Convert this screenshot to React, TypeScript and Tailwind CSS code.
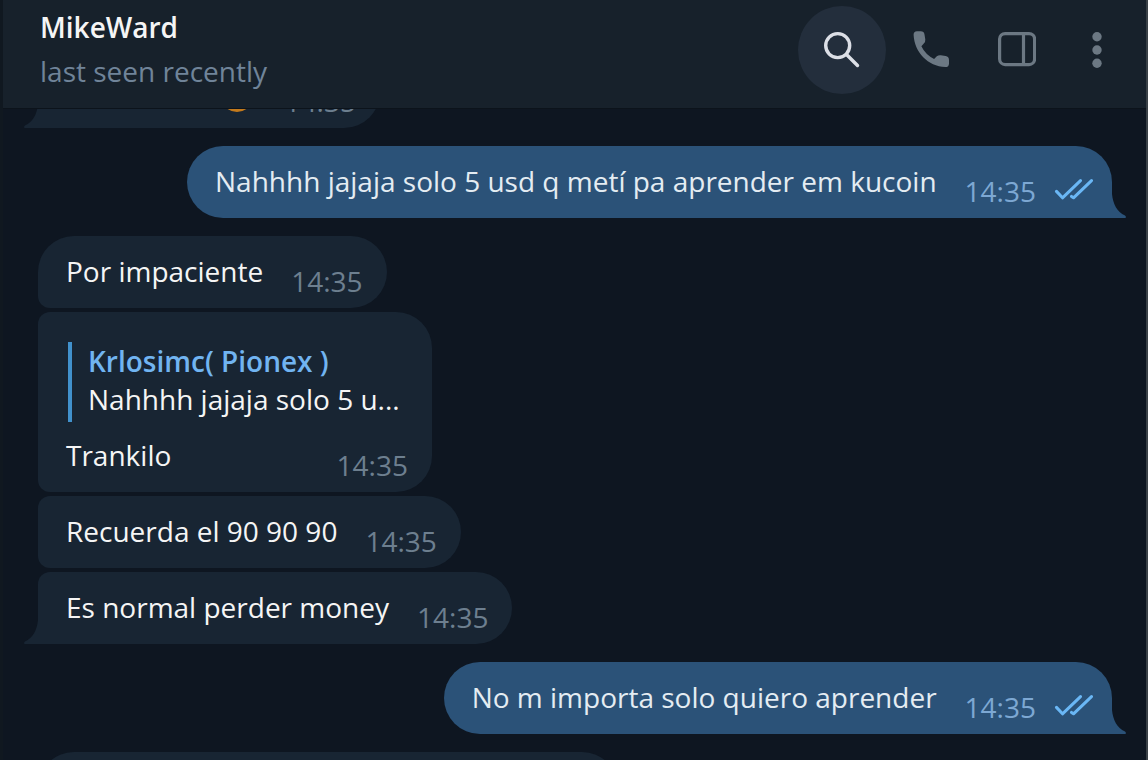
import React from "react";
import clsx from "clsx";

type Message = {
  id: number;
  text: string;
  time: string;
  own?: boolean;
  first?: boolean;
  last?: boolean;
  reply?: { author: string; text: string };
};

const messages: Message[] = [
  { id: 1, text: "Nahhhh jajaja solo 5 usd q metí pa aprender em kucoin", time: "14:35", own: true, first: true, last: true },
  { id: 2, text: "Por impaciente", time: "14:35", first: true },
  { id: 3, text: "Trankilo", time: "14:35", reply: { author: "Krlosimc( Pionex )", text: "Nahhhh jajaja solo 5 u..." } },
  { id: 4, text: "Recuerda el 90 90 90", time: "14:35" },
  { id: 5, text: "Es normal perder money", time: "14:35", last: true },
  { id: 6, text: "No m importa solo quiero aprender", time: "14:35", own: true, first: true, last: true },
];

function Tail({ own }: { own?: boolean }) {
  return (
    <svg
      aria-hidden="true"
      viewBox="0 0 14 24"
      className={clsx(
        "absolute bottom-0 h-6 w-3.5",
        own ? "left-full text-[#2b5278]" : "right-full -scale-x-100 text-[#182533]",
      )}
    >
      <path d="M0 0C1 10 5 18 13 21.6Q14.6 23 13.4 24H0Z" fill="currentColor" />
    </svg>
  );
}

function Ticks() {
  return (
    <svg role="img" aria-label="Read" viewBox="0 0 40 24" className="h-6 w-10 text-[#6ab7f5]">
      <path
        d="M2.5 12.4 8.5 18.8 26.5 1.6M17.5 17.4 19.5 18.8 37.5 1.6"
        fill="none"
        stroke="currentColor"
        strokeWidth="3"
        strokeLinecap="round"
        strokeLinejoin="round"
      />
    </svg>
  );
}

function Bubble({ message }: { message: Message }) {
  const { own, first, last, reply } = message;
  return (
    <li
      className={clsx(
        "relative w-fit max-w-full pb-4.5 pl-7",
        own ? "self-end bg-[#2b5278] pr-4.5 text-[#e4ecf2]" : "bg-[#182533] pr-6 text-[#f5f5f5]",
        own ? "rounded-[36px] rounded-br-none" : "rounded-r-[36px]",
        !own && (first ? "rounded-tl-[36px]" : "rounded-tl-xl"),
        !own && (last ? "rounded-bl-none" : "rounded-bl-xl"),
        reply ? "pt-7.5" : "pt-4",
        first ? "mt-4.5" : "mt-1",
      )}
    >
      {reply && (
        <blockquote className="mb-3.5 ml-0.5 w-[340px] border-l-4 border-[#4191cc] pb-1 pl-4">
          <p className="font-semibold text-[#71b4f1]">{reply.author}</p>
          <p className="whitespace-nowrap">{reply.text}</p>
        </blockquote>
      )}
      <div className="flex justify-between gap-7">
        <p>{message.text}</p>
        <div className={clsx("flex h-[38px] translate-y-2.5 items-center gap-[18px]", own ? "text-[#7da8d3]" : "text-[#6d7f8f]")}>
          <time>{message.time}</time>
          {own && <Ticks />}
        </div>
      </div>
      {last && <Tail own={own} />}
    </li>
  );
}

function IconButton({ label, className, children }: { label: string; className: string; children: React.ReactNode }) {
  return (
    <button type="button" aria-label={label} className={clsx("flex h-22 items-center justify-center", className)}>
      {children}
    </button>
  );
}

function Header() {
  return (
    <header className="flex h-[109px] shrink-0 items-start justify-between border-b border-[#0c131b] bg-[#17212b] pl-[37px] pr-2.5">
      <div className="flex flex-col gap-1.5 pt-2">
        <h1 className="font-semibold text-[#f5f5f5]">MikeWard</h1>
        <p className="text-[#708499]">last seen recently</p>
      </div>
      <div className="flex pt-1.5 text-[#6c7883]">
        <IconButton label="Search" className="w-22 rounded-full bg-[#232e3c] text-[#dcdfe6]">
          <svg viewBox="0 0 40 40" className="size-10" fill="none" stroke="currentColor" strokeWidth="3.4" strokeLinecap="round">
            <circle cx="15.7" cy="15.6" r="12" />
            <path d="M24.5 24.5 35.5 35.5" />
          </svg>
        </IconButton>
        <IconButton label="Call" className="w-22">
          <svg viewBox="0 0 40 40" className="size-10" fill="currentColor">
            <path d="M7 1.2H10.8Q14 1.2 14.5 4.5L15.3 9.4Q15.6 12 13.6 13.8L11.4 16.2Q15.4 24.6 24.1 28.9L26.8 26.3Q28.5 24.9 30.8 25.2L35.6 26Q39 26.6 39 30V33.4Q39 37 35.4 37C18 36.5 4.4 22.5 3.6 4.8Q3.6 1.2 7 1.2Z" />
          </svg>
        </IconButton>
        <IconButton label="Side panel" className="w-21">
          <svg viewBox="0 0 40 40" className="size-10" fill="none" stroke="currentColor" strokeWidth="3.2">
            <rect x="3.6" y="3.6" width="35" height="31" rx="5.5" />
            <path d="M27.5 3.6V34.6" />
          </svg>
        </IconButton>
        <IconButton label="More options" className="w-[78px]">
          <svg viewBox="0 0 40 40" className="size-10" fill="currentColor">
            <circle cx="20" cy="6.7" r="4.7" />
            <circle cx="20" cy="20" r="4.7" />
            <circle cx="20" cy="33.3" r="4.7" />
          </svg>
        </IconButton>
      </div>
    </header>
  );
}

export default function App() {
  return (
    <div className="flex h-screen flex-col overflow-hidden border-l-3 border-r-2 border-l-[#101820] border-r-[#3a4147] bg-[#0e1621] font-['Open_Sans','Noto_Sans',sans-serif] text-[28px] leading-[38px]">
      <Header />
      <main className="min-h-0 flex-1 overflow-hidden">
        <ul className="-mt-[53px] flex flex-col pl-[35px] pr-[34px]">
          <li className="relative flex h-18 w-[342px] items-end justify-end gap-8 rounded-r-[36px] bg-[#182533] pb-2 pr-6 text-[#6d7f8f]">
            <svg aria-hidden="true" viewBox="0 0 32 32" className="mb-2 size-8">
              <circle cx="16" cy="16" r="16" fill="#c47a1c" />
            </svg>
            <time>14:35</time>
            <Tail />
          </li>
          {messages.map((message) => (
            <Bubble key={message.id} message={message} />
          ))}
          <li className="mt-4.5 h-18 w-[580px] rounded-[36px] rounded-bl-xl bg-[#182533]" />
        </ul>
      </main>
    </div>
  );
}
